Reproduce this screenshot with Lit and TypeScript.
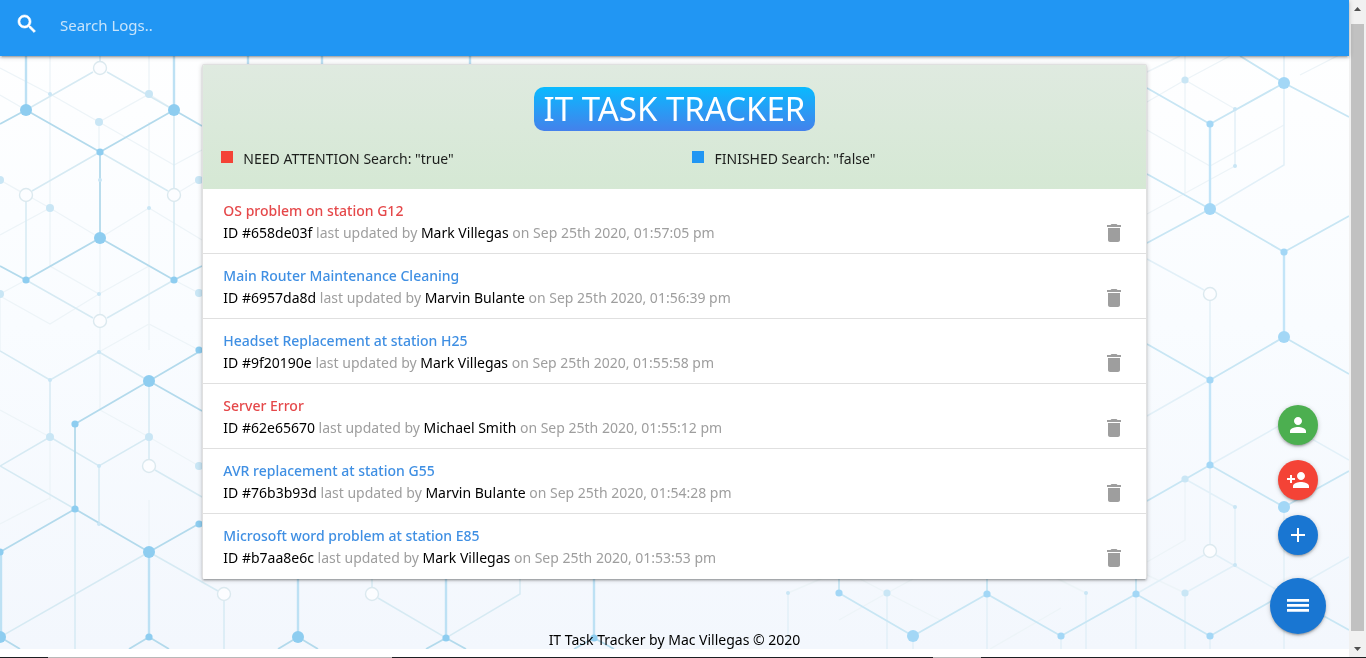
import { LitElement, html, css, svg } from "lit";
import { customElement, state } from "lit/decorators.js";

interface Log {
  id: string;
  message: string;
  attention: boolean;
  tech: string;
  date: string;
}

const LOGS: Log[] = [
  { id: "658de03f", message: "OS problem on station G12", attention: true, tech: "Mark Villegas", date: "Sep 25th 2020, 01:57:05 pm" },
  { id: "6957da8d", message: "Main Router Maintenance Cleaning", attention: false, tech: "Marvin Bulante", date: "Sep 25th 2020, 01:56:39 pm" },
  { id: "9f20190e", message: "Headset Replacement at station H25", attention: false, tech: "Mark Villegas", date: "Sep 25th 2020, 01:55:58 pm" },
  { id: "62e65670", message: "Server Error", attention: true, tech: "Michael Smith", date: "Sep 25th 2020, 01:55:12 pm" },
  { id: "76b3b93d", message: "AVR replacement at station G55", attention: false, tech: "Marvin Bulante", date: "Sep 25th 2020, 01:54:28 pm" },
  { id: "b7aa8e6c", message: "Microsoft word problem at station E85", attention: false, tech: "Mark Villegas", date: "Sep 25th 2020, 01:53:53 pm" },
];

const icon = (d: string) => html`<svg class="icon" viewBox="0 0 24 24" aria-hidden="true"><path d=${d}></path></svg>`;

const ICONS = {
  search: "M15.5 14h-.79l-.28-.27C15.41 12.59 16 11.11 16 9.5 16 5.91 13.09 3 9.5 3S3 5.91 3 9.5 5.91 16 9.5 16c1.61 0 3.09-.59 4.23-1.57l.27.28v.79l5 4.99L20.49 19l-4.99-5zm-6 0C7.01 14 5 11.99 5 9.5S7.01 5 9.5 5 14 7.01 14 9.5 11.99 14 9.5 14z",
  remove: "M6 19c0 1.1.9 2 2 2h8c1.1 0 2-.9 2-2V7H6v12zM19 4h-3.5l-1-1h-5l-1 1H5v2h14V4z",
  person: "M12 12c2.21 0 4-1.79 4-4s-1.79-4-4-4-4 1.79-4 4 1.79 4 4 4zm0 2c-2.67 0-8 1.34-8 4v2h16v-2c0-2.66-5.33-4-8-4z",
  personAdd: "M15 12c2.21 0 4-1.79 4-4s-1.79-4-4-4-4 1.79-4 4 1.79 4 4 4zm-9-2V7H4v3H1v2h3v3h2v-3h3v-2H6zm9 4c-2.67 0-8 1.34-8 4v2h16v-2c0-2.66-5.33-4-8-4z",
  add: "M19 13h-6v6h-2v-6H5v-2h6V5h2v6h6v2z",
};

/* Lattice drawing: paths grouped by how strongly they show, then nodes by size. */
const LEFT_STRONG =
  "M0 124L26 110L100 152L174 110L202 126M100 152V238M0 266L26 280L100 238L174 280L202 266M202 411L149 381L75 424V509L0 552M149 381L202 350M75 509L149 552L202 522M129 649L149 637L169 649M0 637L20 649M278 649L298 637L318 649M426 649L446 638L466 649M574 649L594 638L614 649";
const LEFT_WIDE = "M26 56V110M174 56V110M149 552V637M1 552V637M298 579V637M446 579V638M594 579V638M248 56V66M322 56V66M470 56V66";
const LEFT_SOFT =
  "M26 110L93 72M107 72L174 110M100 56V61M100 152L32 191M100 152L168 191M26 202V280M174 202V280M26 280L93 318M107 318L174 280M174 110V188M99 352L149 381M99 352L50 380V437L0 466L75 509V649M0 351L50 380M50 437L99 466L149 437V459M149 381V437M155 470L202 497M99 466V524M149 552L0 637M149 552L218 591M224 601V649M372 579V587M378 598L446 638L520 594V579";
const LEFT_FAINT =
  "M50 56V94V208V266L99 294L149 266M149 56V94L99 122L50 94M0 68L50 94M149 94L174 110M99 122V152M99 122L174 165L202 150M0 95L26 110M100 238V314M100 328V410M149 122V350M0 180L50 208L100 238M0 180L26 195M174 195L199 180M0 235L50 208M149 208L202 240M149 208L100 238M0 294L26 280M174 280L199 293M0 294V352M0 296L50 324L99 294M99 352L149 324L199 350M149 437L199 466M50 437V500M0 524L50 498M99 524L75 509M149 500V552M0 410L50 437M100 410L149 437";

const RIGHT_STRONG =
  "M1147 88L1210 124L1284 83L1349 117M1240 56L1284 83M1147 174L1210 209L1284 252L1349 216M1147 243L1210 209M1147 344L1210 380L1284 337L1349 374M1147 501L1210 465L1284 507L1349 471M839 579V593L913 636L987 594L1061 636L1136 594L1210 636L1284 594L1349 630M987 579V594M1136 579V594";
const RIGHT_WIDE = "M1210 124V209M1284 252V337M1210 380V465";
const RIGHT_SOFT =
  "M1284 56V165L1210 209M1147 259L1204 290M1210 301V380M1210 465V544M1204 555L1136 594M1216 555L1284 594M1284 507V649M1235 109V166M1185 479L1235 507V565L1185 593V649M1147 416L1210 380M1210 465L1284 423L1349 460M1284 594L1349 557M913 636V649M1061 636V649M1136 594V649M987 594V649M887 593V649M788 593V649M1086 593V649M1210 636V649";
const RIGHT_FAINT =
  "M1185 56V193M1147 72L1180 56M1147 102L1185 80L1235 109M1185 80L1230 56M1147 130L1210 166L1284 125M1147 214L1235 166M1185 479V540L1147 562M1147 575L1185 593M830 575L788 593M860 579L887 593L913 579M1050 575L1086 593M839 620L887 593L940 620M990 649L1061 608M1300 75L1349 50";

const node = (points: number[][], r: number, cls: string) =>
  points.map(([x, y]) => svg`<circle class=${cls} cx=${x} cy=${y} r=${r}></circle>`);

@customElement("app-root")
export class AppRoot extends LitElement {
  @state() private query = "";
  @state() private logs = LOGS;

  static styles = css`
    :host {
      display: flex;
      flex-direction: column;
      min-height: 100vh;
      background: #fff;
      color: rgba(0, 0, 0, 0.87);
      font-family: "Segoe UI", "Noto Sans", "Open Sans", sans-serif;
      font-size: 14px;
      line-height: 22px;
    }
    * { box-sizing: border-box; }
    .window { display: flex; flex: 1; }
    .view { flex: 1; min-width: 0; display: flex; flex-direction: column; padding-bottom: 8px; }
    .page { flex: 1; display: grid; grid-template-columns: minmax(0, 1fr); }
    .backdrop, .content { grid-area: 1 / 1; }
    .backdrop { display: grid; min-height: 0; overflow: hidden; contain: size; }
    .backdrop svg { width: 100%; height: 100%; min-height: 0; }
    .content { display: flex; flex-direction: column; z-index: 1; }

    .strong, .wide, .soft, .faint { fill: none; }
    .strong { stroke: #b3daec; stroke-width: 1.8; }
    .wide { stroke: #bde1f4; stroke-width: 2.4; }
    .soft { stroke: #d6eaf3; stroke-width: 1.5; }
    .faint { stroke: #edf4f8; stroke-width: 1.4; }
    .east .strong { stroke: #c8e6f4; }
    .east .wide { stroke: #c3e5f8; }
    .east .soft { stroke: #e2f0f8; }
    .dot { fill: #8ecdf0; }
    .east .dot { fill: #a3d7f6; }
    .pale { fill: #c9e6f5; }
    .ring { fill: #fcfdff; stroke: #dbe9ef; stroke-width: 1.4; }

    .bar {
      height: 56px;
      display: flex;
      align-items: flex-start;
      background: #2196f3;
      box-shadow: 0 2px 2px 0 rgba(0, 0, 0, 0.14), 0 3px 1px -2px rgba(0, 0, 0, 0.12), 0 1px 5px 0 rgba(0, 0, 0, 0.2);
    }
    .search { flex: 1; display: flex; align-items: center; height: 50px; color: #fff; padding-left: 15px; }
    .search .icon { margin-bottom: 2px; stroke: currentColor; stroke-width: 0.6; }
    .search input {
      flex: 1;
      margin-left: 21px;
      padding: 0;
      border: 0;
      outline: 0;
      background: none;
      color: #fff;
      font: inherit;
      font-size: 15px;
      line-height: 22px;
    }
    .search input::placeholder { color: #c8e4fb; opacity: 1; }
    .icon { width: 24px; height: 24px; fill: currentColor; display: block; }

    .card {
      width: 70%;
      margin: 8px auto 0;
      padding: 0;
      border: 1px solid #e0e0e0;
      border-bottom: 0;
      border-radius: 2px;
      overflow: hidden;
      background: #fff;
      box-shadow: 0 2px 2px 0 rgba(0, 0, 0, 0.14), 0 3px 1px -2px rgba(0, 0, 0, 0.12), 0 1px 5px 0 rgba(0, 0, 0, 0.2);
    }
    .head {
      padding: 22px 0 19px;
      background: linear-gradient(#dfeae0, #d5e8d4);
      display: flex;
      flex-direction: column;
      align-items: center;
    }
    h1 {
      margin: 0;
      padding: 0 10px;
      border-radius: 10px;
      background: linear-gradient(#09baff, #4481eb);
      color: #fff;
      font-size: 33px;
      font-weight: 400;
      line-height: 44px;
      white-space: nowrap;
    }
    .legend { align-self: stretch; display: grid; grid-template-columns: 1fr 1fr; margin-top: 17px; }
    .key { display: flex; align-items: center; padding-left: 18px; gap: 10px; }
    .swatch { width: 12px; height: 12px; margin-bottom: 4px; background: #2196f3; }
    .swatch.red { background: #f44336; }

    ul { list-style: none; margin: 0; padding: 0; }
    .log {
      display: flex;
      align-items: flex-end;
      justify-content: space-between;
      padding: 11px 20px 9px;
      border-bottom: 1px solid #e0e0e0;
    }
    .log:last-child { border-bottom-color: #fff; }
    .log a { display: block; width: max-content; color: #3f8fe3; font-weight: 500; text-decoration: none; }
    .log a.attention { color: #e5484a; }
    .meta { color: #9e9e9e; }
    .meta b { color: #000; font-weight: 400; }
    button { border: 0; padding: 0; cursor: pointer; background: none; }
    .remove { color: #9e9e9e; margin-bottom: -1px; }

    footer { margin-top: auto; padding: 50px 0 0; text-align: center; color: #000; line-height: 18px; }

    .fabs {
      position: fixed;
      right: 40px;
      bottom: 24px;
      display: flex;
      flex-direction: column;
      align-items: center;
    }
    .fab {
      width: 40px;
      height: 40px;
      margin-bottom: 15px;
      border-radius: 50%;
      display: grid;
      place-items: center;
      color: #fff;
      background: #1976d2;
      box-shadow: 0 2px 2px 0 rgba(0, 0, 0, 0.14), 0 3px 1px -2px rgba(0, 0, 0, 0.12), 0 1px 5px 0 rgba(0, 0, 0, 0.2);
    }
    .fab.green { background: #4caf50; }
    .fab.red { background: #f44336; }
    .fab.main { width: 56px; height: 56px; margin: 8px 0 0; }
    .fab.main .icon { width: 32px; height: 28px; }

    .scroll { width: 17px; display: flex; flex-direction: column; align-items: center; background: #f1f1f1; }
    .scroll svg { display: block; width: 17px; height: 17px; fill: #505050; }
    .thumb { flex: 1; width: 13px; margin: 7px 0 9px; background: #c1c1c1; }
    .edge { height: 1px; display: grid; grid-template-columns: 48fr 344fr 541fr 48fr 385fr; background: #1d1f22; }
    .edge i { background: #b8b8b8; }
    .edge i:first-child { grid-column: 2; }
    .edge i:last-child { grid-column: 4; }
  `;

  private get visible() {
    const q = this.query.toLowerCase();
    return this.logs.filter((l) => `${l.id} ${l.message} ${l.tech} ${l.attention}`.toLowerCase().includes(q));
  }

  private backdrop() {
    return html`<div class="backdrop" aria-hidden="true">
      <svg viewBox="0 0 1349 649" preserveAspectRatio="xMinYMin slice">
        <defs>
          <linearGradient id="sky" x1="0" y1="0" x2="0" y2="1">
            <stop offset="0" stop-color="#ffffff"></stop>
            <stop offset="0.5" stop-color="#f9fcff"></stop>
            <stop offset="1" stop-color="#f3f7fd"></stop>
          </linearGradient>
        </defs>
        <rect width="1349" height="649" fill="url(#sky)"></rect>
        <g>
          <path class="faint" d=${LEFT_FAINT}></path>
          <path class="soft" d=${LEFT_SOFT}></path>
          <path class="wide" d=${LEFT_WIDE}></path>
          <path class="strong" d=${LEFT_STRONG}></path>
          ${node([[50, 94], [99, 294], [99, 352], [50, 380], [149, 208], [99, 466], [99, 524], [100, 180]], 2, "pale")}
          ${node([[149, 94], [99, 122], [0, 180], [199, 180], [50, 208], [0, 294], [199, 293], [50, 437], [149, 437], [199, 466]], 4, "pale")}
          ${node([[100, 152], [26, 280], [174, 280], [75, 424], [75, 509], [199, 350], [199, 524], [0, 552], [149, 637], [446, 638], [594, 638]], 3.6, "dot")}
          ${node([[26, 110], [174, 110], [100, 238], [149, 381], [149, 552], [0, 637], [298, 637]], 6, "dot")}
          ${node([[100, 68], [26, 195], [174, 195], [100, 321], [149, 466], [224, 594], [372, 594]], 6.5, "ring")}
        </g>
        <g class="east">
          <path class="faint" d=${RIGHT_FAINT}></path>
          <path class="soft" d=${RIGHT_SOFT}></path>
          <path class="wide" d=${RIGHT_WIDE}></path>
          <path class="strong" d=${RIGHT_STRONG}></path>
          ${node([[1235, 109], [1235, 166], [1235, 507], [1235, 565], [788, 593], [1086, 593]], 2, "pale")}
          ${node([[1185, 80], [1185, 479], [1185, 593], [887, 593]], 3.6, "pale")}
          ${node([[1210, 124], [1284, 252], [1210, 380], [1210, 465], [839, 593], [987, 594], [1061, 636], [1136, 594], [1210, 636]], 3.6, "dot")}
          ${node([[1284, 83], [1210, 209], [1284, 337], [1284, 507], [913, 636]], 6, "dot")}
          ${node([[1210, 294], [1210, 551]], 6.5, "ring")}
        </g>
      </svg>
    </div>`;
  }

  render() {
    return html`
      <div class="window">
        <div class="view">
          <div class="page">
            ${this.backdrop()}
            <div class="content">
              <nav class="bar">
                <label class="search">
                  ${icon(ICONS.search)}
                  <input
                    type="text"
                    aria-label="Search Logs"
                    placeholder="Search Logs.."
                    @input=${(e: Event) => (this.query = (e.target as HTMLInputElement).value)}
                  />
                </label>
              </nav>
              <main class="card">
                <header class="head">
                  <h1>IT TASK TRACKER</h1>
                  <div class="legend">
                    <div class="key"><span class="swatch red"></span><span>NEED ATTENTION Search: "true"</span></div>
                    <div class="key"><span class="swatch"></span><span>FINISHED Search: "false"</span></div>
                  </div>
                </header>
                <ul>
                  ${this.visible.map(
                    (log) => html`<li class="log">
                      <div>
                        <a href="#edit" class=${log.attention ? "attention" : ""}>${log.message}</a>
                        <div class="meta"><b>ID #${log.id}</b> last updated by <b>${log.tech}</b> on ${log.date}</div>
                      </div>
                      <button
                        class="remove"
                        aria-label="Delete log"
                        @click=${() => (this.logs = this.logs.filter((l) => l !== log))}
                      >${icon(ICONS.remove)}</button>
                    </li>`
                  )}
                </ul>
              </main>
              <footer>IT Task Tracker by Mac Villegas © 2020</footer>
            </div>
          </div>
        </div>
        <div class="scroll" aria-hidden="true">
          <svg viewBox="0 0 17 17"><path d="M5 11L8.500 7L12 11Z"></path></svg>
          <div class="thumb"></div>
          <svg viewBox="0 0 17 17"><path d="M5 7L8.500 11L12 7Z"></path></svg>
        </div>
      </div>
      <div class="edge"><i></i><i></i></div>
      <div class="fabs">
        <button class="fab green" aria-label="Technicians">${icon(ICONS.person)}</button>
        <button class="fab red" aria-label="Add technician">${icon(ICONS.personAdd)}</button>
        <button class="fab" aria-label="Add log">${icon(ICONS.add)}</button>
        <button class="fab main" aria-label="Actions">
          <svg class="icon" viewBox="0 0 32 28" aria-hidden="true"><path d="M5 7h22v2.700H5zM5 12h22v2.700H5zM5 17h22v2.700H5z"></path></svg>
        </button>
      </div>
    `;
  }
}
